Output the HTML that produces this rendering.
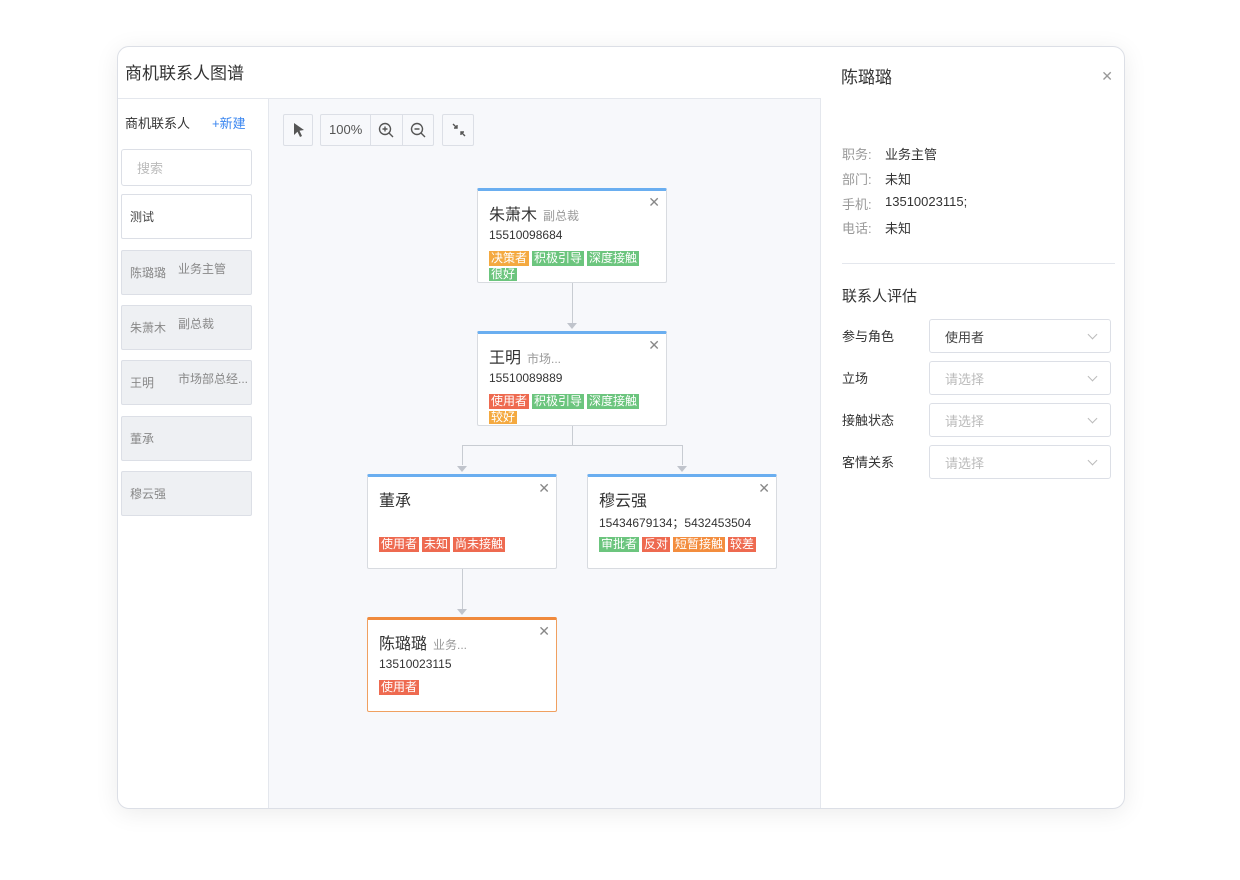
<!DOCTYPE html>
<html><head><meta charset="utf-8"><style>
*{box-sizing:border-box;margin:0;padding:0}
body{width:1240px;height:880px;background:#fff;font-family:"Liberation Sans","Noto Sans CJK SC",sans-serif;position:relative;overflow:hidden;color:#333}
.a{position:absolute}
.frame{left:117px;top:46px;width:1008px;height:763px;border:1px solid #dcdfe6;border-radius:12px;box-shadow:0 4px 24px rgba(0,0,0,.08);overflow:hidden;background:#fff}
.in{left:-1px;top:-1px;width:1008px;height:763px}
.canvas{left:151px;top:53px;width:553px;height:710px;background:#f7f8fb;border-left:1px solid #e4e7ed;border-right:1px solid #e4e7ed}
.item{left:4px;width:131px;height:45px;border:1px solid #dcdfe6;border-radius:2px;background:#eef0f3;font-size:12px;color:#888}
.btn{border:1px solid #dcdfe6;background:#f7f8fb;border-radius:2px;height:32px;top:68px}
.card{width:190px;height:95px;background:#fff;border:1px solid #d8dbe0;border-top:3px solid #6aaef0;border-radius:2px}
.card.or{border:1px solid #f0a060;border-top:3px solid #f08a3c}
.nm{position:absolute;left:11px;top:10px;font-size:16px;color:#333}
.nm small{font-size:12px;color:#999;margin-left:6px}
.ph{position:absolute;left:11px;top:37px;font-size:12px;color:#333}
.x{position:absolute;right:6px;top:4px;font-size:14px;color:#888;line-height:1;font-weight:300}
.tags{position:absolute;left:11px;top:58px;width:170px;line-height:19px;font-size:12px}
.t{display:inline-block;color:#fff;padding:0 2px;line-height:15px;margin-right:3px}
.o{background:#f4a940}.g{background:#6cc57e}.r{background:#ee6a50}.oo{background:#f38d3e}
.line{background:#c8ccd2}
.arr{width:0;height:0;border-left:5px solid transparent;border-right:5px solid transparent;border-top:6px solid #c0c4cc}
.lbl{font-size:13px;color:#999}
.val{font-size:13px;color:#333}
.sel{left:107px;width:182px;height:34px;border:1px solid #dcdfe6;border-radius:3px;font-size:13px;color:#bbb;padding:7px 15px}
.sel:after{content:"";position:absolute;right:14px;top:11px;width:6px;height:6px;border-right:1px solid #bbb;border-bottom:1px solid #bbb;transform:rotate(45deg)}
</style></head><body>
<div class="a frame"><div class="a in">
  <div class="a" style="left:0;top:0;width:704px;height:53px;border-bottom:1px solid #e4e7ed"></div>
  <div class="a" style="left:8px;top:13px;font-size:17px;color:#333">商机联系人图谱</div>
  <div class="a" style="left:8px;top:67px;font-size:13px">商机联系人</div>
  <div class="a" style="left:95px;top:67px;font-size:13px;color:#3a86f0">+新建</div>
  <div class="a" style="left:4px;top:103px;width:131px;height:37px;border:1px solid #dcdfe6;border-radius:3px;background:#fff;font-size:13px;color:#bbb;padding:8px 15px">搜索</div>
  <div class="a item" style="top:148px;background:#fff;color:#444;padding:13px 8px">测试</div>
  <div class="a item" style="top:204px"><span class="a" style="left:8px;top:13px">陈璐璐</span><span class="a" style="left:56px;top:9px">业务主管</span></div>
  <div class="a item" style="top:259px"><span class="a" style="left:8px;top:13px">朱萧木</span><span class="a" style="left:56px;top:9px">副总裁</span></div>
  <div class="a item" style="top:314px"><span class="a" style="left:8px;top:13px">王明</span><span class="a" style="left:56px;top:9px">市场部总经...</span></div>
  <div class="a item" style="top:370px;padding:13px 8px">董承</div>
  <div class="a item" style="top:425px;padding:13px 8px">穆云强</div>
  <div class="a canvas">
    <div class="a btn" style="left:14px;width:30px;top:15px"><svg class="a" style="left:7px;top:7px" width="16" height="16" viewBox="0 0 16 16"><path d="M3 1 L13 8 L8.5 8.8 L11 14 L9 15 L6.5 9.8 L3 13 Z" fill="#555"/></svg></div>
    <div class="a btn" style="left:51px;width:114px;top:15px">
      <span class="a" style="left:8px;top:7px;font-size:13px;color:#555">100%</span>
      <div class="a" style="left:49px;top:0;height:30px;border-left:1px solid #dcdfe6"></div>
      <div class="a" style="left:81px;top:0;height:30px;border-left:1px solid #dcdfe6"></div>
      <svg class="a" style="left:57px;top:7px" width="17" height="17" viewBox="0 0 17 17"><circle cx="7" cy="7" r="5.5" fill="none" stroke="#555" stroke-width="1.4"/><path d="M11 11 L15 15 M4.5 7 H9.5 M7 4.5 V9.5" stroke="#555" stroke-width="1.4"/></svg>
      <svg class="a" style="left:89px;top:7px" width="17" height="17" viewBox="0 0 17 17"><circle cx="7" cy="7" r="5.5" fill="none" stroke="#555" stroke-width="1.4"/><path d="M11 11 L15 15 M4.5 7 H9.5" stroke="#555" stroke-width="1.4"/></svg>
    </div>
    <div class="a btn" style="left:173px;width:32px;top:15px"><svg class="a" style="left:8px;top:7px" width="16" height="16" viewBox="0 0 16 16"><path d="M2 2 L6 6 M6 3 V6 H3 M14 14 L10 10 M10 13 V10 H13" stroke="#555" stroke-width="1.4" fill="none"/></svg></div>
    <div class="a line" style="left:303px;top:184px;width:1px;height:44px"></div>
    <div class="a arr" style="left:298px;top:224px"></div>
    <div class="a line" style="left:303px;top:326px;width:1px;height:20px"></div>
    <div class="a line" style="left:193px;top:346px;width:221px;height:1px"></div>
    <div class="a line" style="left:193px;top:346px;width:1px;height:20px"></div>
    <div class="a line" style="left:413px;top:346px;width:1px;height:20px"></div>
    <div class="a arr" style="left:188px;top:367px"></div>
    <div class="a arr" style="left:408px;top:367px"></div>
    <div class="a line" style="left:193px;top:470px;width:1px;height:40px"></div>
    <div class="a arr" style="left:188px;top:510px"></div>
  </div>
  <div class="a card" style="left:360px;top:142px"><div class="nm">朱萧木<small>副总裁</small></div><div class="x">✕</div><div class="ph">15510098684</div><div class="tags"><span class="t o">决策者</span><span class="t g">积极引导</span><span class="t g">深度接触</span><span class="t g" style="line-height:13px;vertical-align:top">很好</span></div></div>
  <div class="a card" style="left:360px;top:285px"><div class="nm">王明<small>市场...</small></div><div class="x">✕</div><div class="ph">15510089889</div><div class="tags"><span class="t r">使用者</span><span class="t g">积极引导</span><span class="t g">深度接触</span><span class="t o" style="line-height:13px;vertical-align:top">较好</span></div></div>
  <div class="a card" style="left:250px;top:428px"><div class="nm">董承</div><div class="x">✕</div><div class="tags"><span class="t r">使用者</span><span class="t r">未知</span><span class="t r">尚未接触</span></div></div>
  <div class="a card" style="left:470px;top:428px"><div class="nm">穆云强</div><div class="x">✕</div><div class="ph">15434679134；5432453504</div><div class="tags"><span class="t g">审批者</span><span class="t r">反对</span><span class="t oo">短暂接触</span><span class="t r">较差</span></div></div>
  <div class="a card or" style="left:250px;top:571px"><div class="nm">陈璐璐<small>业务...</small></div><div class="x">✕</div><div class="ph">13510023115</div><div class="tags"><span class="t r">使用者</span></div></div>
  <div class="a" style="left:705px;top:0;width:303px;height:763px">
    <div class="a" style="left:19px;top:17px;font-size:17px">陈璐璐</div>
    <div class="a" style="right:12px;top:22px;font-size:14px;color:#999">✕</div>
    <div class="a lbl" style="left:20px;top:98px">职务:</div><div class="a val" style="left:63px;top:98px">业务主管</div>
    <div class="a lbl" style="left:20px;top:123px">部门:</div><div class="a val" style="left:63px;top:123px">未知</div>
    <div class="a lbl" style="left:20px;top:148px">手机:</div><div class="a val" style="left:63px;top:148px">13510023115;</div>
    <div class="a lbl" style="left:20px;top:172px">电话:</div><div class="a val" style="left:63px;top:172px">未知</div>
    <div class="a" style="left:20px;top:217px;width:273px;border-top:1px solid #e4e7ed"></div>
    <div class="a" style="left:20px;top:239px;font-size:15px">联系人评估</div>
    <div class="a val" style="left:20px;top:280px">参与角色</div><div class="a sel" style="top:273px;color:#444">使用者</div>
    <div class="a val" style="left:20px;top:322px">立场</div><div class="a sel" style="top:315px">请选择</div>
    <div class="a val" style="left:20px;top:364px">接触状态</div><div class="a sel" style="top:357px">请选择</div>
    <div class="a val" style="left:20px;top:406px">客情关系</div><div class="a sel" style="top:399px">请选择</div>
  </div>
</div></div>
</body></html>
